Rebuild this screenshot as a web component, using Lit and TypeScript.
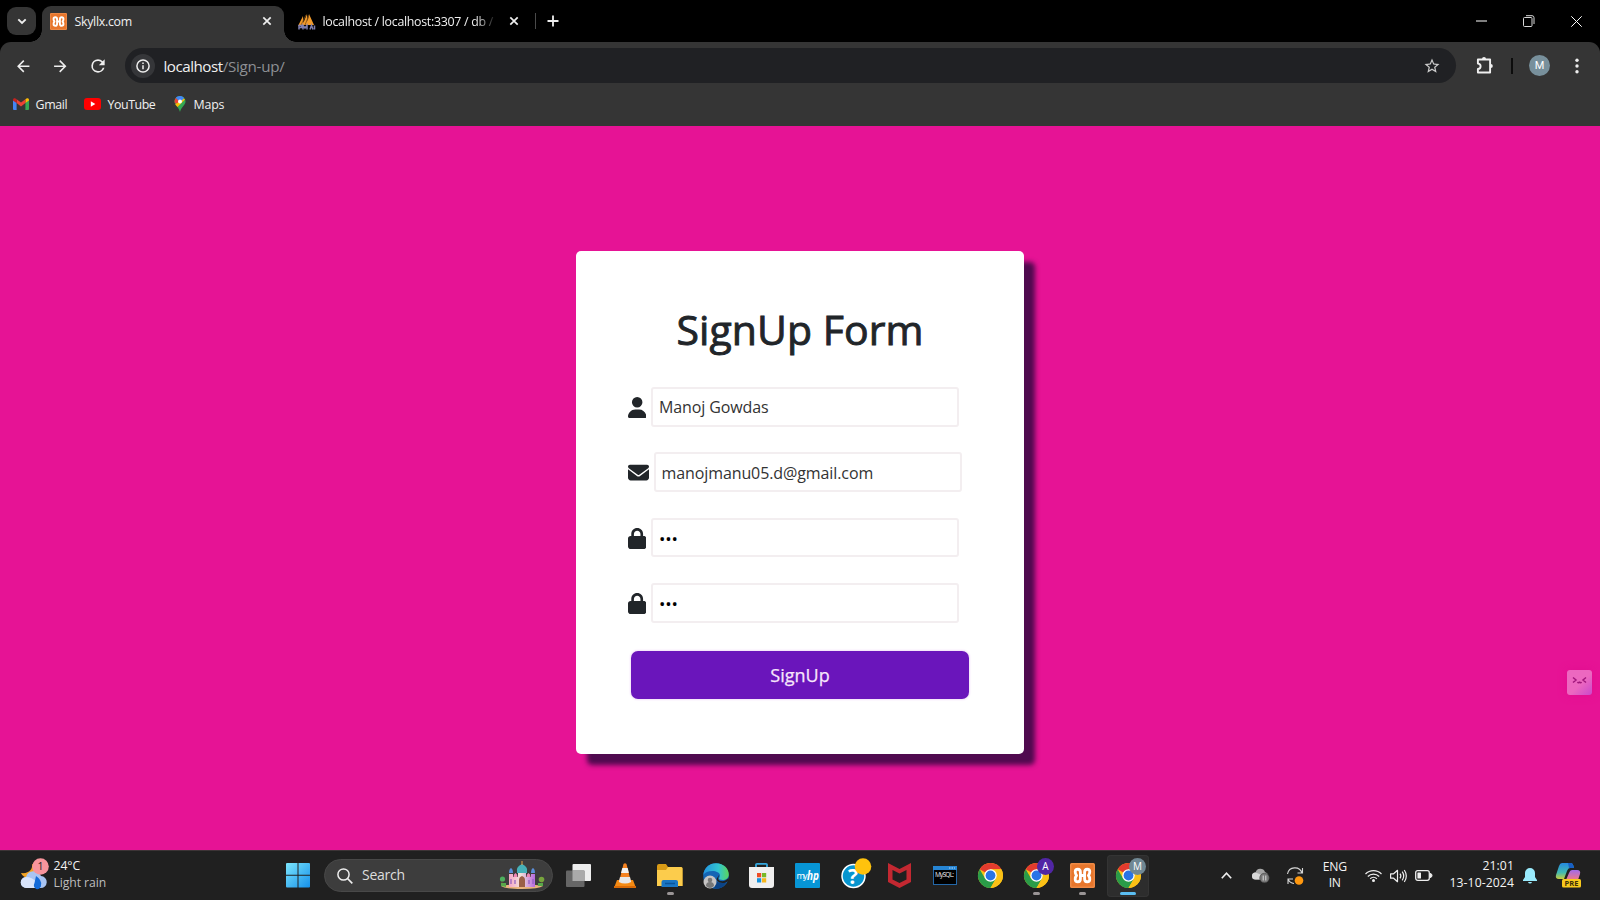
import { LitElement, html, svg, css } from "lit";
import { customElement } from "lit/decorators.js";

const xampp = (s: number) => html`<svg width=${s} height=${s} viewBox="0 0 24 24">
  <rect width="24" height="24" rx="1.5" fill="#e8762c"/>
  <rect x=".8" y=".8" width="22.4" height="22.4" rx="1" fill="none" stroke="#f19a5c" stroke-width=".8"/>
  <path d="M10 12V9Q10 6 7.500 6T5 8.500Q5 10.500 6.300 12 5 13.500 5 15.500 5 18 7.500 18T10 15V12H14V9Q14 6 16.500 6T19 8.500Q19 10.500 17.700 12 19 13.500 19 15.500 19 18 16.500 18T14 15V12" fill="none" stroke="#fff" stroke-width="2.700" stroke-linejoin="round"/>
</svg>`;

const chrome = svg`
  <circle cx="12.5" cy="12.5" r="12.5" fill="#fbc116"/>
  <path d="M12.5 12.5 1.7 6.2A12.5 12.5 0 0 1 23.4 6.3H12.5z" fill="#e33b2e"/>
  <path d="M1.7 6.2A12.5 12.5 0 0 0 12.5 25l5.6-9.5-5.6-3-5.4 3z" fill="#2a9c48"/>
  <path d="M12.5 6.3h10.9A12.5 12.5 0 0 1 12.5 25l5.5-9.4z" fill="#fbc116"/>
  <circle cx="12.5" cy="12.5" r="6.2" fill="#fff"/>
  <circle cx="12.5" cy="12.5" r="4.9" fill="#2a74e6"/>`;

const chromeIcon = html`<svg width="25" height="25" viewBox="0 0 25 25">${chrome}</svg>`;

const close = html`<svg width="10" height="10" viewBox="0 0 10 10"><path d="M1.3 1.3l7.4 7.4M8.7 1.3 1.3 8.7" stroke="#eee" stroke-width="1.7"/></svg>`;

const USER = "M224 256A128 128 0 1 0 224 0a128 128 0 1 0 0 256zm-45.7 48C79.8 304 0 383.8 0 482.3C0 498.7 13.3 512 29.7 512H418.3c16.4 0 29.7-13.3 29.7-29.7C448 383.8 368.2 304 269.7 304H178.3z";
const MAIL = "M48 64C21.5 64 0 85.5 0 112c0 15.1 7.1 29.3 19.2 38.4L236.8 313.6c11.4 8.5 27 8.5 38.4 0L492.8 150.4c12.1-9.1 19.2-23.3 19.2-38.4c0-26.5-21.5-48-48-48H48zM0 176V384c0 35.3 28.7 64 64 64H448c35.3 0 64-28.7 64-64V176L294.4 339.2c-22.8 17.1-54 17.1-76.8 0L0 176z";
const LOCK = "M144 144v48H304V144c0-44.2-35.8-80-80-80s-80 35.8-80 80zM80 192V144C80 64.5 144.5 0 224 0s144 64.5 144 144v48h16c35.3 0 64 28.7 64 64V448c0 35.3-28.7 64-64 64H64c-35.3 0-64-28.7-64-64V256c0-35.3 28.7-64 64-64H80z";

@customElement("browser-chrome")
class BrowserChrome extends LitElement {
  static styles = css`
    :host { display: block; height: 126px; background: #000; color: #f0f0f0; font-family: "Open Sans", sans-serif; }
    svg { display: block; flex: none; overflow: visible; }
    .strip { height: 42px; display: flex; align-items: flex-end; box-sizing: border-box; font-size: 12.4px; }
    .drop { width: 29px; height: 28px; border-radius: 9px; background: #353535; margin: 0 6px 7px 7px; display: grid; place-items: center; }
    .tab { height: 36px; width: 242px; box-sizing: border-box; display: flex; align-items: center; padding: 0 12.5px 6px 8px; position: relative; }
    .active { background: #353535; border-radius: 9px 9px 0 0; }
    .active::before, .active::after { content: ""; position: absolute; bottom: 0; width: 12px; height: 12px; }
    .active::before { left: -12px; background: radial-gradient(circle at 0 0, transparent 11.5px, #353535 12px); }
    .active::after { right: -12px; background: radial-gradient(circle at 100% 0, transparent 11.5px, #353535 12px); }
    .title { margin-left: 7.500px; flex: 1; white-space: nowrap; letter-spacing: -.3px; }
    .second { width: 250.500px; padding: 0 15.5px 6px 14px; }
    .second .title { flex: none; width: 174px; margin: 0 auto 0 6.500px; letter-spacing: -.3px; -webkit-mask-image: linear-gradient(90deg, #000 152px, transparent 174px); }
    .sep { width: 1px; height: 16px; background: #4a4a4a; margin-bottom: 13px; }
    .plus { margin: 0 0 15px 11.500px; }
    .win { margin-left: auto; display: flex; padding-bottom: 14px; }
    .slot { width: 47.5px; display: grid; place-items: center; height: 14px; flex: none; }
    .lower { background: #353535; height: 84px; border-radius: 11px 11px 0 0; }
    .tools { height: 47.500px; display: flex; align-items: center; }
    .nav { width: 37.5px; display: grid; place-items: center; flex: none; }
    .navs { display: flex; padding-left: 4px; width: 121px; flex: none; }
    .omni { width: 1331px; height: 35px; border-radius: 18px; background: #202124; display: flex; align-items: center; box-sizing: border-box; padding: 0 15px 0 6px; font-size: 15.2px; letter-spacing: -.5px; }
    .info { width: 24px; height: 24px; border-radius: 50%; background: #353639; display: grid; place-items: center; margin-right: 8.500px; }
    .path { color: #8e9094; letter-spacing: -.26px; }
    .star { margin-left: auto; }
    .puz { margin-left: 20px; }
    .bar { width: 2px; height: 16px; background: #0c0c0c; margin-left: 17px; }
    .ava { width: 21px; height: 21px; border-radius: 50%; background: #78909c; display: grid; place-items: center; margin-left: 16px; font: 11px Roboto, sans-serif; color: #fff; }
    .dots { margin-left: 24px; }
    .marks { display: flex; align-items: center; height: 29px; padding-left: 13px; font-size: 12.4px; letter-spacing: -.35px; }
    .mark { display: flex; align-items: center; gap: 6.500px; height: 29px; }
    .gm { width: 71px; } .yt { width: 89px; letter-spacing: -.45px; } .mp { letter-spacing: -.2px; }
  `;
  render() {
    return html`
      <div class="strip">
        <div class="drop"><svg width="10" height="7" viewBox="0 0 10 7"><path d="M1.3 1.3 5 5l3.7-3.7" fill="none" stroke="#eee" stroke-width="1.9"/></svg></div>
        <div class="tab active">${xampp(17)}<span class="title">Skyllx.com</span>${close}</div>
        <div class="tab second">
          <svg width="18" height="17" viewBox="0 0 18 17"><path d="M0 13 5 3l.5 9z M4.5 12 9 1l1 11z M9 12l2-11 5 11z" fill="#f29a2a"/><path d="M3 12 8 2M7 12l4-10" stroke="#7a4d17" stroke-width=".8"/><path d="M1 16.5v-4h2.5v2H1M5 16.5v-4l2 2.5 2-2.5v4M12 16.5l1.500-4 1.500 4M16.500 12.500v4" fill="none" stroke="#8080b0" stroke-width="1.5"/></svg>
          <span class="title">localhost / localhost:3307 / db /</span>${close}
        </div>
        <div class="sep"></div>
        <svg class="plus" width="12" height="12" viewBox="0 0 12 12"><path d="M6 .5v11M.5 6h11" stroke="#eee" stroke-width="1.8"/></svg>
        <div class="win">
          <div class="slot"><svg width="11" height="2"><path d="M0 1h11" stroke="#fff"/></svg></div>
          <div class="slot"><svg width="12" height="12" viewBox="0 0 12 12"><g fill="none" stroke="#d8d8d8"><rect x=".5" y="2.5" width="8.5" height="9" rx="1"/><path d="M3 .7h6a2 2 0 0 1 2 2V9"/></g></svg></div>
          <div class="slot"><svg width="11" height="11" viewBox="0 0 11 11"><path d="M.3.3l10.4 10.4M10.7.3.3 10.7" stroke="#fff"/></svg></div>
        </div>
      </div>
      <div class="lower">
        <div class="tools">
          <div class="navs">
            <div class="nav"><svg width="18.5" height="18.5" viewBox="0 0 24 24"><path d="M20 11H7.83l5.59-5.59L12 4l-8 8 8 8 1.41-1.41L7.83 13H20v-2z" fill="#eee"/></svg></div>
            <div class="nav"><svg width="18.5" height="18.5" viewBox="0 0 24 24"><path d="M4 13h12.17l-5.59 5.59L12 20l8-8-8-8-1.41 1.41L16.17 11H4z" fill="#eee"/></svg></div>
            <div class="nav"><svg width="20" height="20" viewBox="0 0 24 24"><path d="M17.65 6.35A7.958 7.958 0 0 0 12 4a8 8 0 1 0 7.73 10h-2.08A6 6 0 1 1 12 6c1.66 0 3.14.69 4.22 1.78L13 11h7V4l-2.35 2.35z" fill="#eee"/></svg></div>
          </div>
          <div class="omni">
            <div class="info"><svg width="14" height="14" viewBox="0 0 14 14"><circle cx="7" cy="7" r="6.1" fill="none" stroke="#eee" stroke-width="1.5"/><path d="M7 6.2v4M7 3.6v1.5" stroke="#eee" stroke-width="1.5"/></svg></div>
            <span>localhost</span><span class="path">/Sign-up/</span>
            <svg class="star" width="18" height="18" viewBox="0 0 24 24"><path d="M22 9.24l-7.19-.62L12 2 9.19 8.63 2 9.24l5.46 4.73L5.82 21 12 17.27 18.18 21l-1.63-7.03L22 9.24zM12 15.4l-3.76 2.27 1-4.28-3.32-2.88 4.38-.38L12 6.1l1.71 4.04 4.38.38-3.32 2.88 1 4.28L12 15.4z" fill="#ccc"/></svg>
          </div>
          <svg class="puz" width="18" height="17" viewBox="0 0 18 17"><path d="M1.9 2.5H14.1V15.5H1.9V12a2.700 2.700 0 0 0 0-5.400z" fill="none" stroke="#f0f0f0" stroke-width="1.9" stroke-linejoin="round"/><path d="M6 2a2 2 0 0 1 4 0zM14.800 7a2 2 0 0 1 0 4z" fill="#f0f0f0"/></svg>
          <div class="bar"></div><div class="ava">M</div>
          <svg class="dots" width="6" height="16" viewBox="0 0 6 16"><g fill="#eee"><circle cx="3" cy="2.2" r="1.7"/><circle cx="3" cy="8" r="1.7"/><circle cx="3" cy="13.8" r="1.7"/></g></svg>
        </div>
        <div class="marks">
          <div class="mark gm"><svg width="16" height="12" viewBox="0 0 16 12"><path d="M0 2v9a1 1 0 0 0 1 1h2.6V4.5z" fill="#4285f4"/><path d="M16 2v9a1 1 0 0 1-1 1h-2.6V4.5z" fill="#34a853"/><path d="M12.4 1.2V5L16 2.6V2c0-1.900-2-2.400-3.600-.8z" fill="#fbbc04"/><path d="M3.600 5V1.200L8 4.500l4.400-3.300V5L8 8.400z" fill="#ea4335"/><path d="M0 2v.6L3.600 5V1.200C2-.4 0 .1 0 2z" fill="#c5221f"/></svg>Gmail</div>
          <div class="mark yt"><svg width="17" height="12" viewBox="0 0 17 12"><rect width="17" height="12" rx="3" fill="#f00"/><path d="M6.800 3.300v5.400L11.300 6z" fill="#fff"/></svg>YouTube</div>
          <div class="mark mp"><svg width="14" height="16" viewBox="0 0 14 16"><path d="M7 0C3.700 0 1.500 2.500 1.500 5.500c0 3.500 4 5 5.500 10.500 1.500-5.500 5.500-7 5.500-10.500C12.500 2.500 10.300 0 7 0z" fill="#34a853"/><path d="M2.300 8.500 8.500 1.500l3.500 2L4.500 11z" fill="#fbbc04"/><path d="M2.800 2C4.500-.2 8.500-.8 11 2L7 6.500z" fill="#4285f4"/><path d="M2.800 2 6 5 4.500 7 2 7.500C1.200 5.500 1.600 3.400 2.800 2z" fill="#ea4335"/><circle cx="7" cy="5.500" r="2" fill="#fff"/></svg>Maps</div>
        </div>
      </div>`;
  }
}

@customElement("signup-page")
class SignupPage extends LitElement {
  static styles = css`
    :host { height: 724px; background: #e61395; display: grid; place-items: start center; position: relative; font-family: "Open Sans", sans-serif; box-sizing: border-box; padding-top: 125px; }
    .card { width: 448px; height: 503px; box-sizing: border-box; background: #fff; border-radius: 5px; box-shadow: 11px 11px 5px #500a4f; padding: 48px 52px 0; color: #212529; }
    h1 { font-size: 41px; line-height: 60px; font-weight: 500; text-align: center; margin: 0 0 28px; letter-spacing: .05px; -webkit-text-stroke: .9px #212529; }
    .row { display: flex; align-items: center; height: 39.500px; margin-bottom: 25.900px; gap: 4.500px; }
    svg { display: block; flex: none; position: relative; top: .5px; }
    input { width: 308.500px; height: 39.500px; box-sizing: border-box; border: 2px solid #f3eef0; border-radius: 3px; padding: 1px 6px 0; background: #fff; color: #333; font: 16px "Open Sans", sans-serif; letter-spacing: -.1px; outline: none; }
    input[type="password"] { color: #000; font: 17px "Open Sans", sans-serif; }
    button { display: block; margin: 28px 0 0 3px; width: 338px; height: 48px; border: 0; border-radius: 7px; background: #6a15bb; color: #f7e6fb; font: 18px "Open Sans", sans-serif; -webkit-text-stroke: .25px #f7e6fb; box-shadow: 0 0 2px 1px #f3e0fa; }
    .float { position: absolute; left: 1566.500px; top: 543.500px; width: 25px; height: 25px; border-radius: 3px; background: linear-gradient(135deg, #ec68c0 55%, #ca48cc); box-shadow: 0 0 8px #e00d8e; }
  `;
  row(path: string, w: number, type: string, value: string) {
    return html`<div class="row"><svg width=${w * 21 / 512} height="21" viewBox="0 0 ${w} 512"><path d=${path} fill="#212529"/></svg><input type=${type} .value=${value}></div>`;
  }
  render() {
    return html`
      <div class="card">
        <h1>SignUp Form</h1>
        ${this.row(USER, 448, "text", "Manoj Gowdas")}
        ${this.row(MAIL, 512, "text", "manojmanu05.d@gmail.com")}
        ${this.row(LOCK, 448, "password", "123")}
        ${this.row(LOCK, 448, "password", "123")}
        <button>SignUp</button>
      </div>
      <div class="float"><svg width="25" height="25" viewBox="0 0 25 25"><path d="M6 7.500l3 2.500-3 2.500M19 7.500 16 10l3 2.500M10.500 12q1 1.500 2 .3 1 1.200 2-.3" fill="none" stroke="#a0187c" stroke-width="1.500"/></svg></div>`;
  }
}

@customElement("task-bar")
class TaskBar extends LitElement {
  static styles = css`
    :host { height: 50px; box-sizing: border-box; border-top: 1px solid #3d3436; background: #202020; display: flex; align-items: center; color: #f4f4f4; font: 12.200px/16.500px "Open Sans", sans-serif; letter-spacing: -.2px; }
    svg { display: block; flex: none; overflow: visible; }
    .weather { width: 286px; display: flex; align-items: center; padding-left: 20px; padding-bottom: 2px; box-sizing: border-box; gap: 4.500px; flex: none; letter-spacing: -.08px; }
    .grey { color: #bdbdbd; }
    .search { margin-left: 14px; width: 229px; height: 33.500px; box-sizing: border-box; border-radius: 17px; background: #3d3d3d; border: 1px solid #484848; display: flex; align-items: center; padding: 0 7px 0 12px; gap: 9px; font-size: 14px; color: #ddd; letter-spacing: -.25px; flex: none; }
    .search .art { margin-left: auto; }
    .apps { display: flex; margin-left: 3px; flex: none; }
    .app { width: 45.750px; height: 42px; display: grid; place-items: center; position: relative; }
    .run::after { content: ""; position: absolute; bottom: 1.500px; left: 19.500px; width: 7px; height: 3px; border-radius: 2px; background: #9a9596; }
    .on { background: #2d2d2d; border-radius: 4px; box-shadow: inset 0 0 0 1px #343434; width: 42px; margin-left: 2px; }
    .on::after { left: 13px; width: 16px; background: #5bbef2; }
    .tray { margin-left: auto; display: flex; align-items: center; text-align: center; }
    .c { display: grid; justify-items: center; flex: none; }
    .w34 { width: 34px; } .w25 { width: 25px; } .lang { width: 46.500px; padding-right: 3px; padding-bottom: 1px; } .wifi { width: 25px; }
    .clock { width: 78px; text-align: right; letter-spacing: .1px; white-space: nowrap; padding-bottom: 2px; }
    .bell { width: 31px; } .cop { width: 46px; margin-right: 9px; }
    text { font-family: "Open Sans", sans-serif; letter-spacing: 0; }
  `;
  render() {
    const badge = (l: string, c: string) => html`<svg width="25" height="25" viewBox="0 0 25 25">${chrome}<circle cx="21.500" cy="3.500" r="8.500" fill=${c}/><text x="21.500" y="7.300" font-size="10" fill="#fff" text-anchor="middle">${l}</text></svg>`;
    return html`
      <div class="weather">
        <svg width="29" height="32" viewBox="0 0 29 32"><path d="M12 5c1 5-3 10-11 9 2 6 12 7 16 0V7z" fill="#f3a322"/><path d="M6.500 29a5.500 5.500 0 0 1-.5-11 8 8 0 0 1 15-1 6 6 0 0 1-.5 12z" fill="#a9c4f2"/><path d="M6.500 29a5.500 5.500 0 0 1-.5-11c8 0 10 5 15 11z" fill="#d8e4fa"/><path d="M16 17q6 4 5 9a3.500 3.500 0 0 1-6 3q-2-2-.5-5z" fill="#146bd8"/><circle cx="20.500" cy="7.500" r="8.300" fill="#f7949c"/><text x="20.500" y="11.300" font-size="10.500" text-anchor="middle" fill="#222">1</text></svg>
        <div>24°C<br><span class="grey">Light rain</span></div>
      </div>
      <svg width="24" height="24.500" viewBox="0 0 24 24.500"><defs><linearGradient id="w" x1="0" y1="0" x2="1" y2="1"><stop stop-color="#7ce6fd"/><stop offset="1" stop-color="#1590ea"/></linearGradient></defs><path fill="url(#w)" d="M1 0h10.500v11.700H0V1a1 1 0 0 1 1-1zM12.500 0H23a1 1 0 0 1 1 1v10.700H12.500zM0 12.800h11.500v11.700H1a1 1 0 0 1-1-1zM12.500 12.800H24v10.700a1 1 0 0 1-1 1H12.500z"/></svg>
      <div class="search">
        <svg width="16" height="16" viewBox="0 0 16 16"><circle cx="6.500" cy="6.500" r="5.600" fill="none" stroke="#eee" stroke-width="1.500"/><path d="M10.500 10.500l4.800 4.800" stroke="#eee" stroke-width="1.700"/></svg>Search
        <svg class="art" width="46" height="27" viewBox="0 0 46 27"><defs><linearGradient id="p"><stop stop-color="#f5a6c8"/><stop offset=".45" stop-color="#f3e0d8"/><stop offset="1" stop-color="#b66ae0"/></linearGradient></defs>
          <path d="M2 24Q23 20 44 24q-4 3-21 3T2 24z" fill="#e9b47c"/><path d="M2 24v-3h5v4zM39 24v-3h5v3z" fill="#58a84a"/><path d="M3 21v-3M43 21v-3" stroke="#705239"/><circle cx="3.500" cy="17" r="2.600" fill="#4cae5d"/><circle cx="42.500" cy="17.500" r="2.800" fill="#77a43d"/>
          <path d="M10 25V12h4v3h5v-4h8v4h5v-3h4v13z" fill="url(#p)"/><path d="M18 9q-1-4 5-7 6 3 5 7v2H18z" fill="#46b1b8"/><path d="M23-1v4" stroke="#e3a24b"/><path d="M10 11q0-4 2-5 2 1 2 5zM32 11q0-4 2-5 2 1 2 5z" fill="#5c8fda"/><path d="M14.500 15q0-3 2-4 2 1 2 4zM27.500 15q0-3 2-4 2 1 2 4z" fill="#ef86b5"/><path d="M20 25v-7q0-3 3-4 3 1 3 4v7z" fill="#9a6048"/><path d="M12 17v5M16 18v4M30 18v4M34 17v5" stroke="#905fc0" stroke-width="1.200"/></svg>
      </div>
      <div class="apps">
        <div class="app"><svg width="25" height="23" viewBox="0 0 25 23"><rect x="6.500" width="18.500" height="17" rx="1" fill="#eee"/><rect y="6.500" width="18.500" height="16.500" rx="1" fill="#666"/><path d="M6.500 6.500h12V17h-12z" fill="#aaa"/></svg></div>
        <div class="app"><svg width="22" height="25" viewBox="0 0 22 25"><path d="M3 17h16l3 8H0z" fill="#f48a13"/><path d="M9.500 1q1.500-1.500 3 0L17 19q-6 3-12 0z" fill="#f58220"/><path d="M8.300 5h5.400l1.200 5H7z" fill="#f2f2f2"/><path d="M6 14h10l1.200 5q-6.200 3-12.400 0z" fill="#e8e8e8"/><path d="M0 23h22v2H0z" fill="#d96a07"/></svg></div>
        <div class="app run"><svg width="26" height="23" viewBox="0 0 26 23"><path d="M0 2a2 2 0 0 1 2-2h7l2 3h13a1.500 1.500 0 0 1 1.500 1.500V22H0z" fill="#d99b16"/><path d="M0 6h9l2-3h13a1.500 1.500 0 0 1 1.500 1.500V22H0z" fill="#fccc4c"/><path d="M4.500 23v-5a2 2 0 0 1 2-2H19a2 2 0 0 1 2 2v5z" fill="#1a76c4"/><path d="M8 19.500h10" stroke="#0a549b" stroke-width="1.500"/></svg></div>
        <div class="app"><svg width="26" height="26" viewBox="0 0 26 26"><defs><linearGradient id="e"><stop stop-color="#2392df"/><stop offset=".6" stop-color="#32c5d0"/><stop offset="1" stop-color="#5bd65a"/></linearGradient></defs><circle cx="13" cy="13" r="12.800" fill="#1465b5"/><path d="M.3 12C1 5 6 .2 13 .2c8 0 13 5.800 12.800 11.500C25.500 16 21 18 17 16.500c-2-.8 0-2 0-4C17 9.500 13 8 9.500 8 5 8 2 9.500.3 12z" fill="url(#e)"/><path d="M12 15c1 5 6 6 12 3-2 5-6 8-11 7.800-4-1.800-4-8-1-10.800z" fill="#0b4386"/><path d="M16 12c0 2-2.500 4.500 1.500 6 3 .6 6-.5 8-3l.5 3-5 2c-4 0-7-1-7.500-4z" fill="#202020"/><circle cx="7" cy="19" r="6.500" fill="#c6c4c4"/><circle cx="7" cy="17" r="2.300" fill="#777"/><path d="M3 23q0-4 4-4t4 4q-4 4-8 0z" fill="#777"/></svg></div>
        <div class="app"><svg width="25" height="25" viewBox="0 0 25 25"><path d="M7 5V1.500Q7 .8 8 .8h9q1 0 1 .7V5" fill="none" stroke="#34a8df" stroke-width="1.800"/><path d="M0 4h25v18a3 3 0 0 1-3 3H3a3 3 0 0 1-3-3z" fill="#f0efef"/><path d="M8 10h4.200v4.300H8z" fill="#ed4b25"/><path d="M13 10h4.200v4.300H13z" fill="#78b928"/><path d="M8 15.200h4.200v4.300H8z" fill="#1591dc"/><path d="M13 15.200h4.200v4.300H13z" fill="#f7b61c"/></svg></div>
        <div class="app"><svg width="25" height="25" viewBox="0 0 25 25"><rect width="25" height="25" rx="1" fill="#0795d5"/><text x="1.500" y="15.500" font-size="9" fill="#fff" textLength="11">my</text><text x="12" y="16.500" font-size="12" font-style="italic" font-weight="bold" fill="#fff" textLength="12" lengthAdjust="spacingAndGlyphs">hp</text></svg></div>
        <div class="app"><svg width="25" height="25" viewBox="0 0 25 25"><circle cx="12.500" cy="13" r="11.500" fill="#0795cf" stroke="#fff" stroke-width="1.500"/><text x="12" y="20.500" font-size="21" font-weight="700" fill="#fff" text-anchor="middle">?</text><circle cx="22" cy="3.500" r="8.300" fill="#ffc20d"/></svg></div>
        <div class="app"><svg width="23" height="25" viewBox="0 0 23 25"><path d="M0 0 11.500 6 23 0v19l-11.500 6L0 19zM4.500 7v9.500l7 3.500 7-3.500V7l-7 3.500z" fill="#c32831" fill-rule="evenodd"/></svg></div>
        <div class="app"><svg width="24" height="19" viewBox="0 0 24 19"><rect x=".5" y=".5" width="23" height="18" fill="#000" stroke="#2367a8"/><path d="M0 0h24v4H0z" fill="#2685d4"/><path d="M16 2h6" stroke="#b9ddfa" stroke-dasharray="1.500 1"/><text x="2" y="11" font-size="6.500" fill="#eee" textLength="19">MySQL:</text></svg></div>
        <div class="app">${chromeIcon}</div>
        <div class="app run">${badge("A", "#5126a5")}</div>
        <div class="app run">${xampp(25)}</div>
        <div class="app run on">${badge("M", "#708894")}</div>
      </div>
      <div class="tray">
        <div class="c w34"><svg width="11" height="7" viewBox="0 0 11 7"><path d="M.8 6.200 5.500 1.200l4.700 5" fill="none" stroke="#eee" stroke-width="1.600"/></svg></div>
        <div class="c w34"><svg width="17" height="15" viewBox="0 0 17 15"><path d="M3.500 11.500a3.500 3.500 0 0 1 0-7 5 5 0 0 1 9.500-.5 4 4 0 0 1 1 7.500z" fill="#a6a6a6"/><path d="M3.500 11.500a3.500 3.500 0 0 1 0-7l9 3.500-3 3.500z" fill="#d8d8d8"/><circle cx="12.500" cy="10" r="4.800" fill="#777" stroke="#333" stroke-width=".5"/><path d="M11.200 7.500v5M13.800 7.500v5" stroke="#ddd"/></svg></div>
        <div class="c w34"><svg width="18" height="18" viewBox="0 0 18 18"><path d="M1.500 7A7.500 7.500 0 0 1 16 6M16.500 1v5h-5M2 17v-5h5M2 12a7.500 7.500 0 0 0 6 4.500" fill="none" stroke="#d6d6d6" stroke-width="1.100"/><circle cx="13" cy="13.500" r="4.300" fill="#ff980f"/></svg></div>
        <div class="lang">ENG<br>IN</div>
        <div class="c wifi"><svg width="17" height="13" viewBox="0 0 17 13"><g fill="none" stroke="#eee" stroke-width="1.200"><path d="M.5 5a11 11 0 0 1 16 0M2.800 7.500a8 8 0 0 1 11.400 0M5.200 9.800a4.700 4.700 0 0 1 6.600 0"/></g><circle cx="8.500" cy="11.500" r="1.500" fill="#eee"/></svg></div>
        <div class="c w25"><svg width="17" height="14" viewBox="0 0 17 14"><path d="M.6 4.800h3L7.500 1.300v11.400L3.600 9.200h-3zM10 4.600q1.700 2.400 0 4.800M12.200 2.700q3 4.300 0 8.600M14.300 1q4 6 0 12" fill="none" stroke="#eee" stroke-width="1.200" stroke-linejoin="round"/></svg></div>
        <div class="c w25"><svg width="17" height="11" viewBox="0 0 17 11"><rect x=".7" y=".7" width="13.600" height="9.600" rx="2" fill="none" stroke="#eee" stroke-width="1.300"/><rect x="2.400" y="2.400" width="3.600" height="6.200" rx=".6" fill="#eee"/><path d="M15 3.500a2 2 0 0 1 0 4z" fill="#eee" stroke="#eee"/></svg></div>
        <div class="clock">21:01<br>13-10-2024</div>
        <div class="c bell"><svg width="14" height="17" viewBox="0 0 14 17"><path d="M2 6a5 5 0 0 1 10 0v4l2 3v1H0v-1l2-3zM5 15h4q-.5 1.500-2 1.500T5 15z" fill="#9aebfd"/></svg></div>
        <div class="c cop"><svg width="25" height="25" viewBox="0 0 25 25"><defs><linearGradient id="a" x2="0" y2="1"><stop stop-color="#2589df"/><stop offset=".6" stop-color="#42b9b0"/><stop offset="1" stop-color="#c8cc3c"/></linearGradient><linearGradient id="b" x2="0" y2="1"><stop stop-color="#a26bea"/><stop offset="1" stop-color="#f27a82"/></linearGradient></defs><path d="M6 0h9q2 0 3 5h-4q-2 0-3 3l-3 8H3q-4 0-3-4L3 3q1-3 3-3z" fill="url(#a)"/><path d="M12 0h3q2 0 3 5h-5z" fill="#175fc4"/><path d="M16 7h5q4 0 3 4l-2 6H10l3-7q1-3 3-3z" fill="url(#b)"/><rect x="6" y="16" width="19" height="8.500" rx="1.500" fill="#f8c91d"/><text x="15.500" y="23" text-anchor="middle" font-size="7.500" font-weight="700" fill="#3b3008">PRE</text></svg></div>
      </div>`;
  }
}

@customElement("app-root")
class AppRoot extends LitElement {
  static styles = css`:host { display: grid; grid-template-rows: 126px 724px 50px; width: 1600px; height: 900px; overflow: hidden; }`;
  render() {
    return html`<browser-chrome></browser-chrome><signup-page></signup-page><task-bar></task-bar>`;
  }
}
